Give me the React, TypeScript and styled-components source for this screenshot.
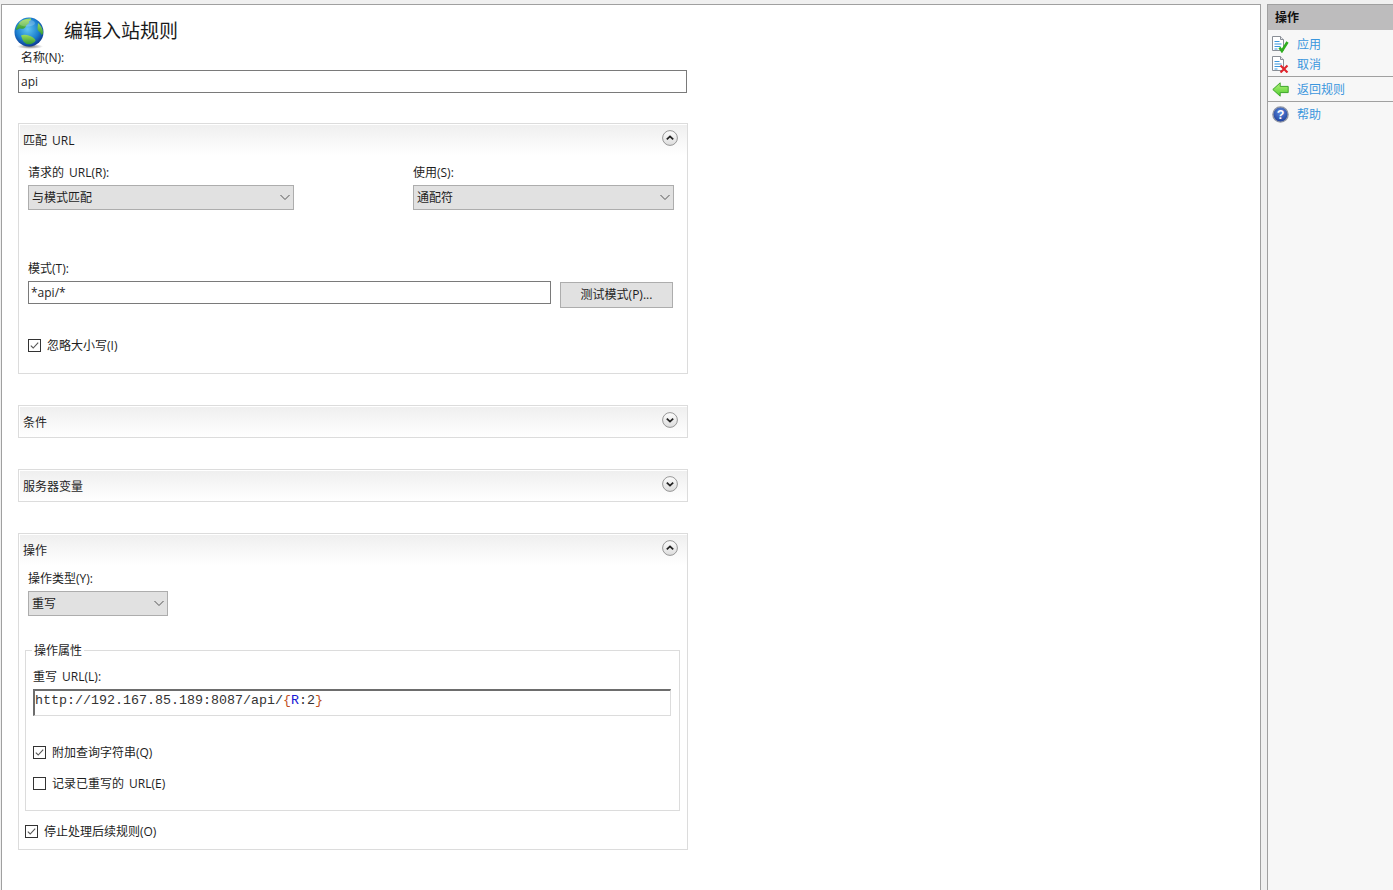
import React from "react";
import styled, { createGlobalStyle } from "styled-components";

const GlobalStyle = createGlobalStyle`
  html, body {
    margin: 0;
    padding: 0;
    height: 100%;
    overflow: hidden;
    background: #f0f0f0;
  }
  body {
    font-family: "Open Sans", "Noto Sans CJK SC", sans-serif;
    font-size: 12px;
    word-spacing: 2px;
    color: #1e1e1e;
  }
`;

const Page = styled.div`
  display: flex;
  width: 1393px;
  height: 890px;
  padding: 4px 0 0 1px;
  box-sizing: border-box;
`;

const Main = styled.main`
  width: 1260px;
  box-sizing: border-box;
  background: #fff;
  border: 1px solid #a0a0a0;
  border-bottom: none;
  padding: 12px 0 0 16px;
  flex-shrink: 0;
`;

const Form = styled.div`
  width: 670px;
`;

const TitleRow = styled.header`
  display: flex;
  align-items: center;
  height: 32px;
  margin-left: -4px;
`;

const PageTitle = styled.h1`
  margin: -4px 0 0 18px;
  font-size: 19px;
  font-weight: 400;
  line-height: 28px;
  color: #1a1a1a;
`;

const Label = styled.div<{ $indent?: number; $top?: number }>`
  line-height: 16px;
  height: 16px;
  margin-left: ${({ $indent }) => $indent ?? 0}px;
  margin-top: ${({ $top }) => $top ?? 0}px;
  margin-bottom: 4px;
`;

const NameLabel = styled(Label)`
  position: relative;
  top: 1px;
  margin-bottom: 5px;
`;

const TextInput = styled.div<{ $width?: number }>`
  box-sizing: border-box;
  width: ${({ $width }) => ($width ? `${$width}px` : "669px")};
  height: 23px;
  line-height: 21px;
  padding-left: 2px;
  border: 1px solid #7a7a7a;
  background: #fff;
`;

const Section = styled.section<{ $height: number; $top: number }>`
  box-sizing: border-box;
  width: 670px;
  height: ${({ $height }) => $height}px;
  margin-top: ${({ $top }) => $top}px;
  border: 1px solid #dcdcdc;
  padding: 1px 0 0 1px;
`;

const SectionHead = styled.div`
  display: flex;
  align-items: center;
  justify-content: space-between;
  height: 30px;
  padding: 0 9px 0 3px;
  background: linear-gradient(#efefef, #ffffff);
  line-height: 16px;
`;

const SectionTitle = styled.span`
  padding-top: 2px;
`;

const Knob = styled.span`
  display: flex;
  margin-bottom: 5px;
`;

const SectionBody = styled.div<{ $top?: number }>`
  padding: ${({ $top }) => $top ?? 10}px 0 0 8px;
`;

const Columns = styled.div`
  display: flex;
`;

const Column = styled.div<{ $width: number }>`
  width: ${({ $width }) => $width}px;
`;

const Select = styled.div<{ $width: number }>`
  box-sizing: border-box;
  display: flex;
  align-items: center;
  justify-content: space-between;
  width: ${({ $width }) => $width}px;
  height: 25px;
  padding: 0 2px 2px 3px;
  background: #e1e1e1;
  border: 1px solid #adadad;
`;

const PatternRow = styled.div`
  display: flex;
  gap: 9px;
`;

const Button = styled.div`
  box-sizing: border-box;
  width: 113px;
  height: 26px;
  margin-top: 1px;
  background: #e1e1e1;
  border: 1px solid #adadad;
  text-align: center;
  line-height: 24px;
`;

const CheckRow = styled.div<{ $top: number; $shift?: number }>`
  display: flex;
  align-items: center;
  gap: 6px;
  height: 16px;
  margin-top: ${({ $top }) => $top}px;
  margin-left: ${({ $shift }) => $shift ?? 0}px;
`;

const Box = styled.span`
  box-sizing: border-box;
  display: flex;
  width: 13px;
  height: 13px;
  border: 1px solid #333;
  background: #fff;
`;

const Fieldset = styled.div`
  position: relative;
  box-sizing: border-box;
  width: 655px;
  height: 161px;
  margin: 34px 0 0 -3px;
  border: 1px solid #dcdcdc;
  padding: 18px 0 0 7px;
`;

const Legend = styled.span`
  position: absolute;
  left: 6px;
  top: -8px;
  padding: 0 2px;
  line-height: 16px;
  background: #fff;
`;

const RewriteInput = styled.div`
  box-sizing: border-box;
  width: 638px;
  height: 27px;
  border: 1px solid #dcdcdc;
  border-top: 2px solid #6d6d6d;
  border-left: 2px solid #6d6d6d;
  padding-top: 2px;
  font-family: "Liberation Mono", monospace;
  font-size: 13.33px;
  line-height: 16px;
  color: #333;
`;

const Brace = styled.span`
  color: #c0501e;
`;

const Token = styled.span`
  color: #1a1ad6;
`;

const Side = styled.aside`
  width: 126px;
  margin-left: 6px;
  background: #f7f7f7;
  border-left: 1px solid #a0a0a0;
  border-top: 1px solid #a0a0a0;
  box-sizing: border-box;
  flex-grow: 1;
`;

const SideHead = styled.div`
  height: 25px;
  line-height: 25px;
  padding-left: 7px;
  background: #bdbcbd;
  font-weight: 700;
  color: #111;
`;

const SideItem = styled.div<{ $divider?: boolean; $tall?: number; $bottom?: number }>`
  display: flex;
  align-items: center;
  gap: 8px;
  height: ${({ $tall }) => $tall ?? 20}px;
  padding-left: 4px;
  padding-bottom: ${({ $bottom }) => $bottom ?? 0}px;
  color: #3a96dd;
  border-bottom: ${({ $divider }) => ($divider ? "1px solid #a0a0a0" : "none")};
`;

const SideList = styled.div`
  padding-top: 4px;
`;

const Globe = () => (
  <svg width="32" height="32" viewBox="0 0 32 32">
    <defs>
      <radialGradient id="ocean" cx="45%" cy="40%" r="65%">
        <stop offset="0" stopColor="#62c6f0" />
        <stop offset="0.6" stopColor="#1b7fd0" />
        <stop offset="1" stopColor="#0a2c86" />
      </radialGradient>
      <linearGradient id="land" x1="0" y1="0" x2="0" y2="1">
        <stop offset="0" stopColor="#9ddc5a" />
        <stop offset="1" stopColor="#2f9a34" />
      </linearGradient>
      <radialGradient id="shade" cx="50%" cy="50%" r="50%">
        <stop offset="0" stopColor="#777" />
        <stop offset="1" stopColor="#777" stopOpacity="0" />
      </radialGradient>
    </defs>
    <ellipse cx="16" cy="29.5" rx="13" ry="2.5" fill="url(#shade)" />
    <circle cx="15" cy="15" r="14.5" fill="url(#ocean)" />
    <path d="M8 3.5c3-1.6 6-2.3 9-2 .5 1.2-.5 2.4-2 2.8.6 1.5-.6 3-2.4 3.6-.8 1.8-1.8 3.3-3.4 3.8-1 .3-2.4-.6-3.6-.2-1.5.5-2.4 1.5-3.8 1.4C2.8 9 5 5.4 8 3.5z" fill="url(#land)" />
    <path d="M24 6c2.6 2.2 4.4 5.2 5 8.4.2 1.6-.4 3-1.2 3.6-1-.8-1.2-2.4-2.4-3.2-1.2-.8-2.2-2.2-1.8-4 .2-1.6.2-3.4.4-4.8z" fill="url(#land)" />
    <path d="M7 18.5c3.5-1.4 8-.4 11.6 1.8 1.4.8 2.6 2 3 3.2-1 2-3.6 3.6-6.6 3.8-3.5-.2-5.4-2.2-6.4-4.6-.5-1.4-1.2-2.8-1.6-4.2z" fill="url(#land)" />
    <ellipse cx="13" cy="6" rx="8" ry="3.6" fill="#fff" opacity="0.22" />
  </svg>
);

const Chevron = ({ up }: { up?: boolean }) => (
  <svg width="16" height="16" viewBox="0 0 16 16">
    <defs>
      <linearGradient id="knob" x1="0" y1="0" x2="0" y2="1">
        <stop offset="0" stopColor="#fdfdfd" />
        <stop offset="1" stopColor="#dcdcdc" />
      </linearGradient>
    </defs>
    <circle cx="8" cy="8" r="7.4" fill="url(#knob)" stroke="#8c8c8c" strokeWidth="0.9" />
    <path
      d={up ? "M4.8 9.4 8 6.4l3.2 3" : "M4.8 6.6 8 9.6l3.2-3"}
      fill="none"
      stroke="#222"
      strokeWidth="1.8"
    />
  </svg>
);

const Caret = () => (
  <svg width="12" height="12" viewBox="0 0 12 12">
    <path d="M1.5 4 6 8.5 10.5 4" fill="none" stroke="#555" strokeWidth="1" />
  </svg>
);

const Tick = () => (
  <svg width="11" height="11" viewBox="0 0 11 11">
    <path d="M1.8 5.6 4.2 8 9.2 2.6" fill="none" stroke="#555" strokeWidth="1.1" />
  </svg>
);

const DocLines = () => (
  <>
    <path d="M0.5 0.5h8l3 3v11h-11z" fill="#fff" stroke="#8a8f96" />
    <path d="M8.5 0.5v3h3" fill="#e4e6ea" stroke="#8a8f96" />
    <path d="M2.5 5.5h5M2.5 8h7M2.5 10.5h6M2.5 13h3" stroke="#3d97dc" strokeWidth="1.2" />
  </>
);

const ApplyIcon = () => (
  <svg width="17" height="17" viewBox="0 0 17 17">
    <DocLines />
    <path d="M7.5 11.5l2.4 3.5 5.6-9" fill="none" stroke="#2fae1e" strokeWidth="2.6" />
  </svg>
);

const CancelIcon = () => (
  <svg width="17" height="17" viewBox="0 0 17 17">
    <DocLines />
    <path d="M8.5 9.5l7 7M15.5 9.5l-7 7" stroke="#e0242c" strokeWidth="2.1" />
  </svg>
);

const BackIcon = () => (
  <svg width="17" height="17" viewBox="0 0 17 17">
    <defs>
      <linearGradient id="arrow" x1="0" y1="0" x2="0" y2="1">
        <stop offset="0" stopColor="#b5f07a" />
        <stop offset="1" stopColor="#4fcf2f" />
      </linearGradient>
    </defs>
    <path d="M0.8 8.5 8.2 1.8v3.6h8v6.2h-8v3.6z" fill="url(#arrow)" stroke="#3da52a" />
  </svg>
);

const HelpIcon = () => (
  <svg width="17" height="17" viewBox="0 0 17 17">
    <defs>
      <radialGradient id="help" cx="50%" cy="35%" r="65%">
        <stop offset="0" stopColor="#5f8be0" />
        <stop offset="1" stopColor="#1d3f9a" />
      </radialGradient>
    </defs>
    <circle cx="8.5" cy="8.5" r="7.6" fill="url(#help)" stroke="#8f95a3" strokeWidth="1.4" />
    <text
      x="8.5"
      y="12.8"
      textAnchor="middle"
      fontSize="12.5"
      fontWeight="700"
      fontFamily="Liberation Sans, sans-serif"
      fill="#fff"
    >
      ?
    </text>
  </svg>
);

const Check = ({
  on,
  top,
  shift,
  children,
}: {
  on?: boolean;
  top: number;
  shift?: number;
  children: React.ReactNode;
}) => (
  <CheckRow $top={top} $shift={shift}>
    <Box>{on && <Tick />}</Box>
    <span>{children}</span>
  </CheckRow>
);

const Head = ({ title, up }: { title: string; up?: boolean }) => (
  <SectionHead>
    <SectionTitle>{title}</SectionTitle>
    <Knob>
      <Chevron up={up} />
    </Knob>
  </SectionHead>
);

export default function App() {
  return (
    <Page>
      <GlobalStyle />
      <Main>
        <TitleRow>
          <Globe />
          <PageTitle>编辑入站规则</PageTitle>
        </TitleRow>
        <Form>
          <NameLabel $indent={3}>名称(N):</NameLabel>
          <TextInput>api</TextInput>

          <Section $height={251} $top={30}>
            <Head title="匹配 URL" up />
            <SectionBody>
              <Columns>
                <Column $width={385}>
                  <Label>请求的 URL(R):</Label>
                  <Select $width={266}>
                    与模式匹配
                    <Caret />
                  </Select>
                </Column>
                <Column $width={261}>
                  <Label>使用(S):</Label>
                  <Select $width={261}>
                    通配符
                    <Caret />
                  </Select>
                </Column>
              </Columns>
              <Label $top={51}>模式(T):</Label>
              <PatternRow>
                <TextInput $width={523}>*api/*</TextInput>
                <Button>测试模式(P)...</Button>
              </PatternRow>
              <Check on top={29}>
                忽略大小写(I)
              </Check>
            </SectionBody>
          </Section>

          <Section $height={33} $top={31}>
            <Head title="条件" />
          </Section>

          <Section $height={33} $top={31}>
            <Head title="服务器变量" />
          </Section>

          <Section $height={317} $top={31}>
            <Head title="操作" up />
            <SectionBody $top={6}>
              <Label>操作类型(Y):</Label>
              <Select $width={140}>
                重写
                <Caret />
              </Select>
              <Fieldset>
                <Legend>操作属性</Legend>
                <Label>重写 URL(L):</Label>
                <RewriteInput>
                  http://192.167.85.189:8087/api/
                  <Brace>{"{"}</Brace>
                  <Token>R</Token>
                  :2
                  <Brace>{"}"}</Brace>
                </RewriteInput>
                <Check on top={28}>
                  附加查询字符串(Q)
                </Check>
                <Check top={15}>记录已重写的 URL(E)</Check>
              </Fieldset>
              <Check on top={12} shift={-3}>
                停止处理后续规则(O)
              </Check>
            </SectionBody>
          </Section>
        </Form>
      </Main>
      <Side>
        <SideHead>操作</SideHead>
        <SideList>
          <SideItem>
            <ApplyIcon />
            应用
          </SideItem>
          <SideItem $divider $bottom={2}>
            <CancelIcon />
            取消
          </SideItem>
          <SideItem $divider $tall={24}>
            <BackIcon />
            返回规则
          </SideItem>
          <SideItem $tall={24}>
            <HelpIcon />
            帮助
          </SideItem>
        </SideList>
      </Side>
    </Page>
  );
}
